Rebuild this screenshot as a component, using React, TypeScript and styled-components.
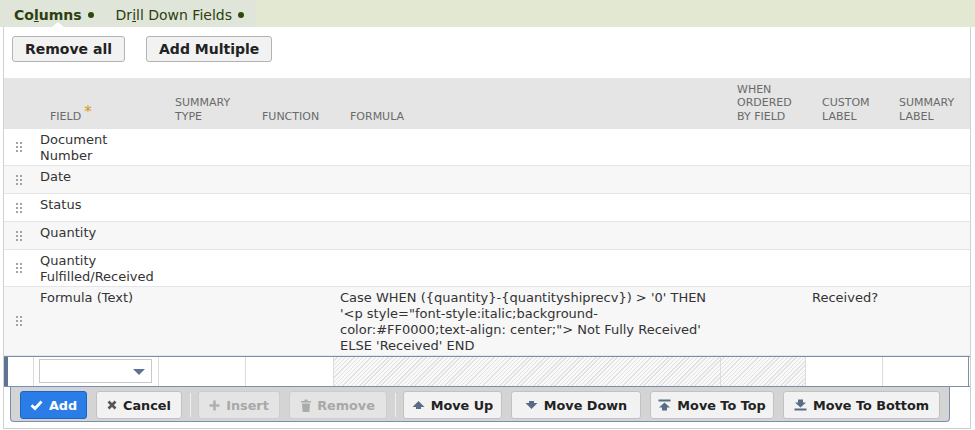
import React from "react";
import styled, { createGlobalStyle, css } from "styled-components";

const GlobalStyle = createGlobalStyle`
  body {
    margin: 0;
    background: #ffffff;
    font-family: "DejaVu Sans", Verdana, sans-serif;
    color: #333333;
  }
`;

const COLS = "30px 125px 87px 88px 387px 85px 77px 86px";

const TabBar = styled.div`
  display: flex;
  height: 27px;
  background: #e3e8d2;
`;

const TabGroup = styled.div`
  display: flex;
  align-items: center;
  gap: 22px;
  padding: 2px 12px 0 14px;
  background: #dfe5d8;
`;

const Tab = styled.div<{ $active?: boolean }>`
  position: relative;
  display: flex;
  align-items: center;
  gap: 6px;
  height: 100%;
  font-size: 14px;
  color: #2c3f0f;
  font-weight: ${(p) => (p.$active ? "bold" : "normal")};

  ${(p) =>
    p.$active &&
    css`
      &::after {
        content: "";
        position: absolute;
        left: 38px;
        bottom: 0;
        border-left: 6px solid transparent;
        border-right: 6px solid transparent;
        border-bottom: 5px solid #ffffff;
      }
    `}

  u {
    text-decoration-thickness: 1px;
  }
`;

const Dot = styled.span`
  width: 6px;
  height: 6px;
  border-radius: 50%;
  background: #2c4a0c;
`;

const Panel = styled.div`
  margin: 0 4px 0 3px;
  border: 1px solid #d0d0d0;
  border-top: none;
  padding-bottom: 6px;
`;

const Toolbar = styled.div`
  display: flex;
  gap: 21px;
  padding: 9px 8px 0;
  margin-bottom: 16px;
`;

const TopButton = styled.button`
  height: 26px;
  padding: 0 12px;
  border: 1px solid #b3b3b3;
  border-radius: 3px;
  background: #f2f2f2;
  font-family: "DejaVu Sans", Verdana, sans-serif;
  font-size: 14px;
  font-weight: bold;
  color: #222222;
`;

const HeaderRow = styled.div`
  display: grid;
  grid-template-columns: ${COLS};
  height: 51px;
  background: #e5e5e5;
  align-items: end;
`;

const HeadCell = styled.div`
  padding: 0 2px 6px 16px;
  font-size: 11px;
  line-height: 13.5px;
  color: #6a6a6a;
  text-transform: uppercase;
`;

const Required = styled.span`
  color: #d9940f;
  font-size: 15px;
  position: relative;
  top: -3px;
  margin-left: 3px;
`;

const DataRow = styled.div<{ $alt?: boolean }>`
  display: grid;
  grid-template-columns: ${COLS};
  min-height: 27px;
  border-bottom: 1px solid #e6e6e6;
  background: ${(p) => (p.$alt ? "#f7f7f7" : "#ffffff")};
`;

const Cell = styled.div<{ $tight?: boolean }>`
  padding: ${(p) => (p.$tight ? "3px 0 1px 6px" : "3px 6px 1px")};
  font-size: 13px;
  line-height: 16px;
  color: #333333;
`;

const HandleCell = styled.div`
  display: flex;
  align-items: center;
  padding-left: 11px;
`;

const EditRow = styled.div`
  display: grid;
  grid-template-columns: ${COLS};
  height: 29px;
  border-top: 1px solid #7c8eae;
  border-bottom: 1px solid #7c8eae;
  background: #ffffff;
`;

const EditCell = styled.div<{ $hatched?: boolean; $first?: boolean; $last?: boolean }>`
  border-right: 1px solid ${(p) => (p.$last ? "#7c8eae" : "#dcdcdc")};
  ${(p) =>
    p.$first &&
    css`
      border-left: 4px solid #5f7394;
    `}
  ${(p) =>
    p.$hatched &&
    css`
      background: repeating-linear-gradient(
        135deg,
        #f9f9f9 0px,
        #f9f9f9 2px,
        #e2e2e2 2px,
        #e2e2e2 3px
      );
    `}
`;

const Select = styled.div`
  position: relative;
  width: 113px;
  height: 24px;
  margin: 2px 0 0 5px;
  box-sizing: border-box;
  border: 1px solid #c9c9c9;
  background: #ffffff;

  &::after {
    content: "";
    position: absolute;
    right: 6px;
    top: 9px;
    border-left: 6px solid transparent;
    border-right: 6px solid transparent;
    border-top: 6px solid #5e7394;
  }
`;

const ActionBar = styled.div`
  display: flex;
  align-items: center;
  width: fit-content;
  margin-left: 6px;
  padding: 4px 9px 2px;
  background: #d4d4d4;
  border: 1px solid #7c8eae;
  border-top: none;
  border-radius: 0 0 4px 4px;
`;

const ActionButton = styled.button<{ $variant?: "primary" | "disabled"; $w: number }>`
  display: flex;
  align-items: center;
  justify-content: center;
  gap: 6px;
  width: ${(p) => p.$w}px;
  height: 28px;
  padding: 0;
  margin-right: 9px;
  border: 1px solid #c2c2c2;
  border-radius: 3px;
  background: #f2f2f2;
  font-family: "DejaVu Sans", Verdana, sans-serif;
  font-size: 12.8px;
  font-weight: bold;
  color: #222222;

  &:last-child {
    margin-right: 0;
  }

  ${(p) =>
    p.$variant === "primary" &&
    css`
      background: #2a7de6;
      border-color: #1b63c6;
      color: #ffffff;
    `}
  ${(p) =>
    p.$variant === "disabled" &&
    css`
      background: #e4e4e4;
      border-color: #cdcdcd;
      color: #a8a8a8;
    `}
`;

const Separator = styled.div`
  width: 1px;
  height: 24px;
  margin: 0 7px 0 -1px;
  background: #efefef;
`;

const Handle = () => (
  <svg width="8" height="10" viewBox="0 0 8 10">
    {[0, 4, 8].map((y) =>
      [1, 5].map((x) => <rect key={`${x}-${y}`} x={x} y={y} width="2" height="2" fill="#a3a3a3" />)
    )}
  </svg>
);

const CheckIcon = () => (
  <svg width="13" height="12" viewBox="0 0 13 12">
    <path d="M1.5 6.2 L5 9.5 L11.5 2.5" fill="none" stroke="#ffffff" strokeWidth="2.8" />
  </svg>
);

const XIcon = () => (
  <svg width="10" height="10" viewBox="0 0 10 10">
    <path d="M1.5 1.5 L8.5 8.5 M8.5 1.5 L1.5 8.5" stroke="#555555" strokeWidth="2.6" />
  </svg>
);

const PlusIcon = () => (
  <svg width="11" height="11" viewBox="0 0 11 11">
    <path d="M5.5 0.5 V10.5 M0.5 5.5 H10.5" stroke="#b0b0b0" strokeWidth="2.6" />
  </svg>
);

const TrashIcon = () => (
  <svg width="10" height="13" viewBox="0 0 10 13">
    <path d="M3.5 0.5 H6.5 V2 H10 V3.5 H0 V2 H3.5 Z M1 4.5 H9 L8.3 13 H1.7 Z" fill="#aaaaaa" />
  </svg>
);

const ArrowIcon = ({ dir, bar }: { dir: "up" | "down"; bar?: boolean }) => (
  <svg width="13" height="12" viewBox="0 0 13 12" style={{ transform: dir === "down" ? "scaleY(-1)" : undefined }}>
    {bar ? (
      <>
        <rect x="0.5" y="0.5" width="12" height="2" fill="#596b85" />
        <path d="M6.5 3.5 L12 8.5 H9 V11.5 H4 V8.5 H1 Z" fill="#596b85" />
      </>
    ) : (
      <path d="M6.5 2 L12.5 8 H9 V10 H4 V8 H0.5 Z" fill="#596b85" />
    )}
  </svg>
);

const rows: { field: string; formula?: string; label?: string }[] = [
  { field: "Document Number" },
  { field: "Date" },
  { field: "Status" },
  { field: "Quantity" },
  { field: "Quantity Fulfilled/Received" },
  {
    field: "Formula (Text)",
    formula:
      "Case WHEN ({quantity}-{quantityshiprecv}) > '0' THEN '<p style=\"font-style:italic;background-color:#FF0000;text-align: center;\"> Not Fully Received' ELSE 'Received' END",
    label: "Received?",
  },
];

const App = () => {
  return (
    <>
      <GlobalStyle />
      <TabBar>
        <TabGroup>
          <Tab $active>
            <span>
              Co<u>l</u>umns
            </span>
            <Dot />
          </Tab>
          <Tab>
            <span>
              Dr<u>i</u>ll Down Fields
            </span>
            <Dot />
          </Tab>
        </TabGroup>
      </TabBar>

      <Panel>
        <Toolbar>
          <TopButton>Remove all</TopButton>
          <TopButton>Add Multiple</TopButton>
        </Toolbar>

        <HeaderRow>
          <div />
          <HeadCell>
            Field<Required>*</Required>
          </HeadCell>
          <HeadCell>Summary Type</HeadCell>
          <HeadCell>Function</HeadCell>
          <HeadCell>Formula</HeadCell>
          <HeadCell>When Ordered By Field</HeadCell>
          <HeadCell>Custom Label</HeadCell>
          <HeadCell>Summary Label</HeadCell>
        </HeaderRow>

        {rows.map((row, i) => (
          <DataRow key={row.field} $alt={i % 2 === 1}>
            <HandleCell>
              <Handle />
            </HandleCell>
            <Cell $tight>{row.field}</Cell>
            <Cell />
            <Cell />
            <Cell>{row.formula}</Cell>
            <Cell />
            <Cell $tight>{row.label}</Cell>
            <Cell />
          </DataRow>
        ))}

        <EditRow>
          <EditCell $first />
          <EditCell>
            <Select />
          </EditCell>
          <EditCell />
          <EditCell />
          <EditCell $hatched />
          <EditCell $hatched />
          <EditCell />
          <EditCell $last />
        </EditRow>

        <ActionBar>
          <ActionButton $variant="primary" $w={67}>
            <CheckIcon />
            Add
          </ActionButton>
          <ActionButton $w={86}>
            <XIcon />
            Cancel
          </ActionButton>
          <Separator />
          <ActionButton $variant="disabled" $w={82}>
            <PlusIcon />
            Insert
          </ActionButton>
          <ActionButton $variant="disabled" $w={98}>
            <TrashIcon />
            Remove
          </ActionButton>
          <Separator />
          <ActionButton $w={99}>
            <ArrowIcon dir="up" />
            Move Up
          </ActionButton>
          <ActionButton $w={130}>
            <ArrowIcon dir="down" />
            Move Down
          </ActionButton>
          <ActionButton $w={124}>
            <ArrowIcon dir="up" bar />
            Move To Top
          </ActionButton>
          <ActionButton $w={157}>
            <ArrowIcon dir="down" bar />
            Move To Bottom
          </ActionButton>
        </ActionBar>
      </Panel>
    </>
  );
};

export default App;
